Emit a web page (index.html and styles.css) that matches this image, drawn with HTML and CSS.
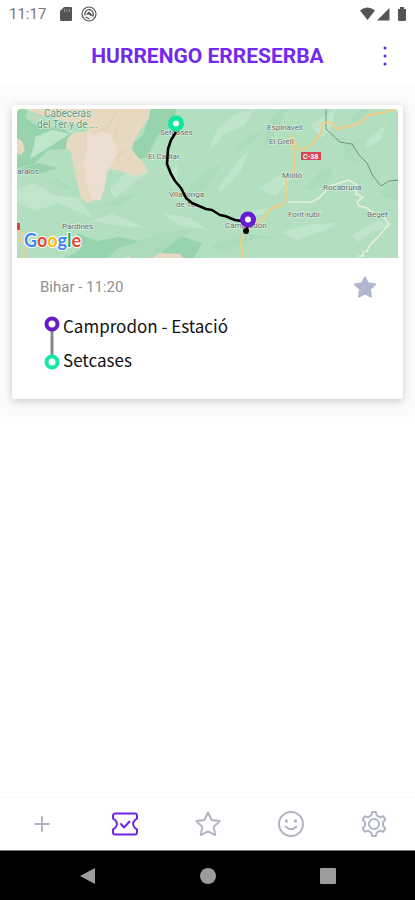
FILE: index.html
```html
<!DOCTYPE html>
<html lang="eu">
<head>
<meta charset="utf-8">
<meta name="viewport" content="width=device-width, initial-scale=1">
<title>Hurrengo erreserba</title>
<link rel="stylesheet" href="styles.css">
</head>
<body>
<div class="status">
  <time>11:17</time>
  <svg class="status-sd" width="12" height="14" viewBox="0 0 12 14" aria-hidden="true"><path d="M4 0h7a1 1 0 0 1 1 1v12a1 1 0 0 1-1 1H1a1 1 0 0 1-1-1V4z" fill="#555"/><path d="M4.500 2v3M7 2v3M9.500 2v3" stroke="#999"/></svg>
  <svg class="status-app" width="16" height="16" viewBox="0 0 16 16" fill="none" stroke="#555" aria-hidden="true"><circle cx="8" cy="8" r="7" stroke-width="1.200"/><path d="M4 9.500A4.300 4.300 0 1 1 11.500 10.500M4.500 11l4 2" stroke-width="1.300"/><path d="M5.500 8l2.500-2 3 3-1.500.5L8 8z" fill="#555"/></svg>
  <svg class="status-right" width="47" height="14" viewBox="0 0 47 14" fill="#555" aria-hidden="true"><path d="M0 3.500Q7.500-2.500 15 3.500L7.500 13z"/><path d="M29.500 1v12.500H17z"/><path d="M38 2h2V0h4v2h2v11a1 1 0 0 1-1 1h-6a1 1 0 0 1-1-1z"/></svg>
</div>
<header class="header">
  <h1>HURRENGO ERRESERBA</h1>
  <button class="more" type="button" aria-label="Menua"><svg width="4" height="22" viewBox="0 0 4 22" fill="#6620ef"><circle cx="2" cy="3" r="1.500"/><circle cx="2" cy="11" r="1.500"/><circle cx="2" cy="19" r="1.500"/></svg></button>
</header>
<main class="main">
  <div class="list">
    <article class="card">
      <svg class="map" viewBox="0 0 381 149" preserveAspectRatio="xMidYMid slice" role="img" aria-label="Camprodon - Setcases">
        <rect width="381" height="149" fill="#b3dfc1"/>
        <g fill="#97d3ac">
          <path d="M0 0h11l-3 8 10 8 28 4 13 8-6 12-22 1-14 14-17 4z"/>
          <path d="M134 0h26l-5 18-14 8-11 22-10 3-6-15 12-10z"/>
          <path d="M60 124l20 8 22-4 24 5 35-7 24 8-8 15H48l15-8z"/>
          <path d="M2 60l20-6 18 5-14 5-17 1z"/>
        </g>
        <g fill="#bfe5ca">
          <path d="M18 28l17-7 18 4-16 10-24 15 4-14z"/>
          <path d="M93 80l14-15 21-8 4 5-15 12-20 15z"/>
          <path d="M0 80l17-6 20 12 24 3 15 20-35-15-22 8-19-8z"/>
          <path d="M200 20l20-16 18-4-10 16-22 10-15 18zM203 76l19-25 9-9-7 20-14 16-9 5z"/>
          <path d="M294 16l25-16-6 22-9 7zM350 32l19-17-4 14-16 11zM225 110l22-5 5-7-14 3-25 10z"/>
          <path d="M265 123l28-8 27-1-10 7-32 10zM160 55l-8 12 4 13 5-10zM75 112l20-7 35 14-20-1zM145 104l28 5 18 12-30-5z"/>
          <path d="M242 80l25-17 10 4-19 20zM335 126l25-14 18 5-24 6-13 10z"/>
        </g>
        <g fill="#abdbba">
          <path d="M25 72l20 7 11 1-15-11zM84 98l18-10 19-5-14 13zM170 80l20-20 15-5-16 24-14 8z"/>
          <path d="M286 80l17-17 14-6-4 15-18 9zM250 19l10-18 10-1-9 20-15 22zM326 36l18-6-10 12 8 13-15-6z"/>
          <path d="M195 137l34-12 37 4-28 1-35 15zM365 80l16-11v22l-17-4zM100 140l45-16 33-4-20 12-20 17H90z"/>
          <path d="M332 10l13-10h10l-17 14zM218 38l15-12 14-4-12 11-14 10z"/>
        </g>
        <g fill="#e6d9c0">
          <path d="M8 0h125l-1 9-12 17-6 14 14 16 3 7-12 4-19-6-11-1-6 15-4 15-6 4-9-4-5-22-4-18-1-7-5-4 1-9 6-6 12-1 5-5-21-5-10-2-7-4-5 1-9-3z"/>
          <path d="M0 29l5 3 3 9-4 5-4-1zM135 149l8-5 20 1 3 4zM108 149l5-3v3z"/>
        </g>
        <path d="M70 24l12-2 13 4 5 17-3 9-7 11-3 19-4 10-9-2-5-18-2-19 3-9z" fill="#eadfd2"/>
        <path d="M75 25l16-7 9-16M96 31l4-14 7-8M98 49l13-9M15 10l20-5M72 18l7 8" fill="none" stroke="#dccfae"/>
        <path d="M309 0v20l14 13 12 2 7 11 8 8 6 13 8 10 8-5 9-1" fill="none" stroke="#73917d"/>
        <path d="M271 93h24l7-4 11-12 19-6 8 5-1 9 7 3-6 5 2 4 8 2 9 7 7 1 6 8-10 12-9 9-3 6-4 1v4h-5" fill="none" stroke="#e5f1db" stroke-width="1.500"/>
        <g fill="none" stroke="#f4cd82" stroke-width="2" stroke-linejoin="round">
          <path d="M226 149l-2-16 3-10 20-14 6-9 12-4 4-7 1-11-1-7 9-12-2-25-2-7 7 13 5 1 8-5 10-12 2-10 7-1 7 7 21-5 11-9 16-3 14-4V0"/>
          <path d="M0 119l6 6-4 6 8 5-4 13"/>
        </g>
        <rect y="114" width="3" height="7" fill="#da4545"/>
        <rect x="284" y="43" width="20" height="8" fill="#d74552"/>
        <text x="286" y="50" class="road">C-38</text>
        <g class="park"><text x="27" y="8">Cabeceras</text><text x="20" y="19">del Ter y de ...</text></g>
        <g class="place">
          <text x="143" y="26">Setcases</text><text x="131" y="50">El Catllar</text><text x="0" y="65">aralos</text>
          <text x="152" y="88">Vilallonga</text><text x="159" y="98">de Ter</text><text x="45" y="120">Pardines</text>
          <text x="250" y="21">Espinavell</text><text x="252" y="35">El Grell</text><text x="265" y="69">Molló</text>
          <text x="306" y="81">Rocabruna</text><text x="271" y="108">Font-rubí</text><text x="350" y="108">Beget</text><text x="208" y="119">Camprodon</text>
        </g>
        <text x="7" y="138" class="google"><tspan fill="#4285f4">G</tspan><tspan fill="#ea4335">o</tspan><tspan fill="#fbbc05">o</tspan><tspan fill="#4285f4">g</tspan><tspan fill="#34a853">l</tspan><tspan fill="#ea4335">e</tspan></text>
        <path d="M159 23l-5 8-3 9-1 15 4 10 4 7 6 7 5 10 6 5 14 6 6 1 8 5 5 1 10 4 13 2-1 7-2 2" fill="none" stroke="#000" stroke-width="2.600" stroke-linejoin="round"/>
        <circle cx="229" cy="122" r="3"/>
        <circle cx="159" cy="14.500" r="5.500" fill="#fff" stroke="#0de89c" stroke-width="5"/>
        <circle cx="231" cy="110.500" r="5.500" fill="#fff" stroke="#651bd4" stroke-width="5"/>
      </svg>
      <div class="info">
        <div class="meta">
          <time>Bihar - 11:20</time>
          <button type="button" aria-label="Gogokoa"><svg width="24" height="24" viewBox="0 0 24 24" fill="#b1b7cc" stroke="#b1b7cc" stroke-width="2" stroke-linejoin="round"><path d="M12 2.500l2.800 5.800 7.200.9-5.200 5 1.200 7.300-6-3.200-6 3.200 1.200-7.300L2 9.200l7.200-.9z"/></svg></button>
        </div>
        <div class="route">
          <svg width="16" height="54" viewBox="0 0 16 54" fill="#fff" aria-hidden="true"><path d="M8 8v38" stroke="#888" stroke-width="3"/><circle cx="8" cy="8" r="5.500" stroke="#651bc9" stroke-width="4"/><circle cx="8" cy="46" r="5.500" stroke="#13e9a3" stroke-width="4"/></svg>
          <ol><li>Camprodon - Estació</li><li>Setcases</li></ol>
        </div>
      </div>
    </article>
  </div>
</main>
<nav class="tabs">
  <a href="#new" aria-label="Berria"><svg viewBox="0 0 28 28"><path d="M14 7v14M7 14h14"/></svg></a>
  <a href="#bookings" aria-label="Erreserbak" class="active"><svg viewBox="0 0 28 28"><path d="M4 3.500h20a2 2 0 0 1 2 2v3l-2 1.500c-2.500 2.500-2.500 5.500 0 8l2 1.500v3a2 2 0 0 1-2 2H4a2 2 0 0 1-2-2v-3L4 18c2.500-2.500 2.500-5.500 0-8L2 8.500v-3a2 2 0 0 1 2-2z"/><path d="M10 14l3 3.500 5.500-6"/></svg></a>
  <a href="#favourites" aria-label="Gogokoak"><svg viewBox="0 0 28 28"><path d="M14 2.500l3.500 7.400 8.200 1.200-5.900 5.700 1.300 8.400-7.100-3.900-7.100 3.900 1.300-8.400-5.900-5.700 8.200-1.200z"/></svg></a>
  <a href="#profile" aria-label="Profila"><svg viewBox="0 0 28 28"><circle cx="14" cy="14" r="12"/><path d="M8.500 16.500q5.500 5.500 11 0"/><g fill="currentColor" stroke="none"><circle cx="9.500" cy="11" r="1.700"/><circle cx="18.500" cy="11" r="1.700"/></g></svg></a>
  <a href="#settings" aria-label="Ezarpenak"><svg viewBox="0 0 28 28"><path d="M12.200 2h3.600l1 3.500 3 1.700 3.500-1 2 3.300-2.300 2.800v3.400l2.300 2.800-2 3.300-3.500-1-3 1.700-1 3.500h-3.600l-1-3.500-3-1.700-3.500 1-2-3.300L5 15.700v-3.400L2.700 9.500l2-3.300 3.500 1 3-1.700z"/><circle cx="14" cy="14" r="5"/></svg></a>
</nav>
<div class="system">
  <button type="button" aria-label="Atzera"><svg viewBox="0 0 18 18"><path d="M16 1v16L1 9z"/></svg></button>
  <button type="button" aria-label="Hasiera"><svg viewBox="0 0 18 18"><circle cx="9" cy="9" r="8"/></svg></button>
  <button type="button" aria-label="Azkenak"><svg viewBox="0 0 18 18"><rect x="1" y="1" width="16" height="16" rx="1"/></svg></button>
</div>
</body>
</html>
```
FILE: styles.css
```css
* { box-sizing: border-box; }
body {
  margin: 0;
  min-height: 100vh;
  display: flex;
  flex-direction: column;
  background: #fff;
  font-family: Roboto, sans-serif;
}
svg { display: block; }
button { padding: 0; border: 0; background: none; }
.status {
  display: flex;
  align-items: center;
  height: 28px;
  padding: 0 8px 0 9px;
  font-size: 15px;
  color: #777;
}
.status-sd { margin-left: 14px; }
.status-app { margin-left: 9px; }
.status-right { margin-left: auto; }
.header {
  display: grid;
  grid-template-columns: 60px 1fr 60px;
  align-items: center;
  height: 56px;
}
.header h1 {
  grid-column: 2;
  margin: 0;
  text-align: center;
  font-size: 21px;
  line-height: 28px;
  font-weight: 700;
  color: #7329ee;
}
.more { justify-self: center; }
.main { flex: 1; }
.list { padding: 21px 12px 18px; background: #fbfbfb; }
.card {
  padding: 4px 5px;
  background: #fff;
  border-radius: 3px;
  box-shadow: 0 2px 8px rgba(0, 0, 0, 0.2);
}
.map { width: 100%; height: auto; border-radius: 4px 4px 0 0; }
.place, .park { font-size: 8px; fill: #5d6963; stroke: #e9f4e9; stroke-width: 1px; paint-order: stroke; }
.park { font-size: 10px; fill: #639579; }
.road { font-size: 7px; font-weight: 700; fill: #fff; }
.google { font-family: Lato, sans-serif; font-size: 18px; font-weight: 700; stroke: #fff; stroke-width: 2px; paint-order: stroke; }
.info { padding: 17px 21px 18px 23px; }
.meta {
  display: flex;
  align-items: center;
  justify-content: space-between;
  font-size: 15px;
  line-height: 24px;
  color: #909090;
}
.route { display: flex; gap: 3px; padding: 17px 0 0 4px; }
.route ol {
  margin: -7px 0 0;
  padding: 0;
  list-style: none;
  font-family: "Noto Sans CJK JP", sans-serif;
  font-size: 17px;
  line-height: 34px;
  color: #111;
}
.tabs {
  display: grid;
  grid-template-columns: repeat(5, 1fr);
  height: 53px;
  border-top: 1px solid #f8f8f8;
}
.tabs a { display: grid; place-items: center; color: #b1b5c5; }
.tabs svg { width: 28px; height: 28px; fill: none; stroke: currentColor; stroke-width: 2; stroke-linecap: round; stroke-linejoin: round; }
.tabs .active { color: #7125e4; }
.system {
  display: flex;
  align-items: center;
  justify-content: center;
  gap: 102px;
  height: 50px;
  border-top: 1px solid #777;
  background: #000;
}
.system svg { width: 18px; height: 18px; fill: #9c9c9c; }
```
